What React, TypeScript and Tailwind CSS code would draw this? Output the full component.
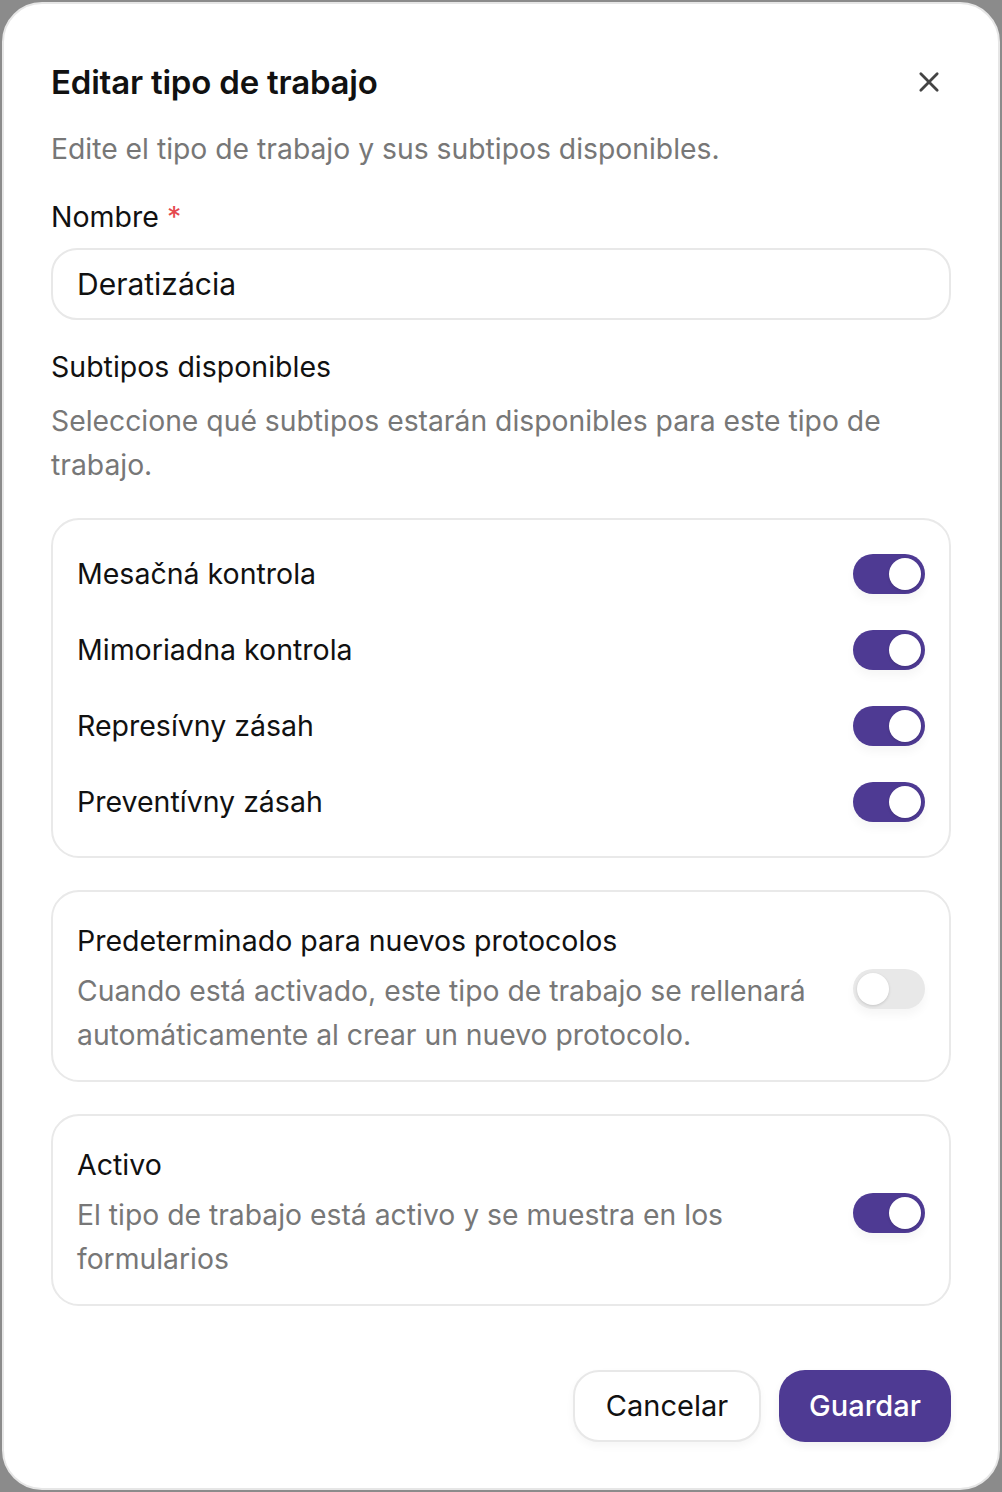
import React from "react";

const font = { fontFamily: "Inter, 'Noto Sans', sans-serif" };

const Toggle = ({ on }: { on: boolean }) => (
  <div
    className={
      on
        ? "flex h-[40px] w-[72px] shrink-0 items-center justify-end rounded-full bg-[#4e3a93] p-[4px] shadow-[0_6px_10px_rgba(0,0,0,0.04)]"
        : "flex h-[40px] w-[72px] shrink-0 items-center justify-start rounded-full bg-[#e8e8e8] p-[4px] shadow-[0_6px_10px_rgba(0,0,0,0.04)]"
    }
  >
    <div className="h-[32px] w-[32px] rounded-full bg-white shadow-[0_1px_3px_rgba(0,0,0,0.15)]" />
  </div>
);

const SettingCard = ({ title, desc, on }: { title: string; desc: string; on: boolean }) => (
  <div className="flex items-center justify-between gap-6 rounded-[28px] border-2 border-[#e9e9e9] px-[24px] pb-[23px] pt-[29px]">
    <div className="flex flex-col gap-[8px]">
      <div className="text-[28.5px] leading-[40px] text-[#111]">{title}</div>
      <div className="text-[28.3px] leading-[44px] text-[#777]">{desc}</div>
    </div>
    <Toggle on={on} />
  </div>
);

const subtypes = ["Mesačná kontrola", "Mimoriadna kontrola", "Represívny zásah", "Preventívny zásah"];

export default function App() {
  return (
    <div className="min-h-[1492px] w-[1002px] bg-[#8b8b8b] p-[2px]" style={font}>
      <div className="flex h-[1488px] flex-col rounded-[40px] border-2 border-[#e6e6e6] bg-white px-[47px] pt-[54px]">
        <div className="flex items-center justify-between">
          <h2 className="text-[33px] font-semibold leading-[48px] tracking-[-0.2px] text-[#111]">Editar tipo de trabajo</h2>
          <svg width="28" height="28" viewBox="0 0 24 24" fill="none" stroke="#444" strokeWidth="2.4" strokeLinecap="round" className="mr-[8px]">
            <path d="M5 5l14 14M19 5L5 19" />
          </svg>
        </div>
        <p className="mt-[23px] text-[28.3px] leading-[40px] text-[#777]">Edite el tipo de trabajo y sus subtipos disponibles.</p>

        <label className="mt-[28px] text-[28.5px] leading-[40px] text-[#111]">
          Nombre <span className="text-[#e5484d]">*</span>
        </label>
        <div className="mt-[11px] flex h-[72px] items-center rounded-[26px] border-2 border-[#e8e8e8] px-[24px] text-[30px] text-[#111]">
          Deratizácia
        </div>

        <div className="mt-[27px] text-[28.5px] leading-[40px] text-[#111]">Subtipos disponibles</div>
        <p className="mt-[12px] text-[28.3px] leading-[44px] text-[#777]">
          Seleccione qué subtipos estarán disponibles para este tipo de trabajo.
        </p>

        <div className="mt-[31px] flex flex-col gap-[36px] rounded-[28px] border-2 border-[#e9e9e9] px-[24px] py-[34px]">
          {subtypes.map((s) => (
            <div key={s} className="flex h-[40px] items-center justify-between">
              <span className="text-[28.5px] text-[#111]">{s}</span>
              <Toggle on />
            </div>
          ))}
        </div>

        <div className="mt-[32px] flex flex-col gap-[32px]">
          <SettingCard
            title="Predeterminado para nuevos protocolos"
            desc="Cuando está activado, este tipo de trabajo se rellenará automáticamente al crear un nuevo protocolo."
            on={false}
          />
          <SettingCard
            title="Activo"
            desc="El tipo de trabajo está activo y se muestra en los formularios"
            on
          />
        </div>

        <div className="mt-[64px] flex justify-end gap-[18px]">
          <button className="h-[72px] w-[188px] rounded-[26px] border-2 border-[#e8e8e8] bg-white text-[29px] text-[#111] shadow-[0_4px_8px_rgba(0,0,0,0.04)]">
            Cancelar
          </button>
          <button className="h-[72px] w-[172px] rounded-[26px] bg-[#4e3a93] text-[29px] font-medium text-white shadow-[0_4px_8px_rgba(0,0,0,0.06)]">
            Guardar
          </button>
        </div>
      </div>
    </div>
  );
}
